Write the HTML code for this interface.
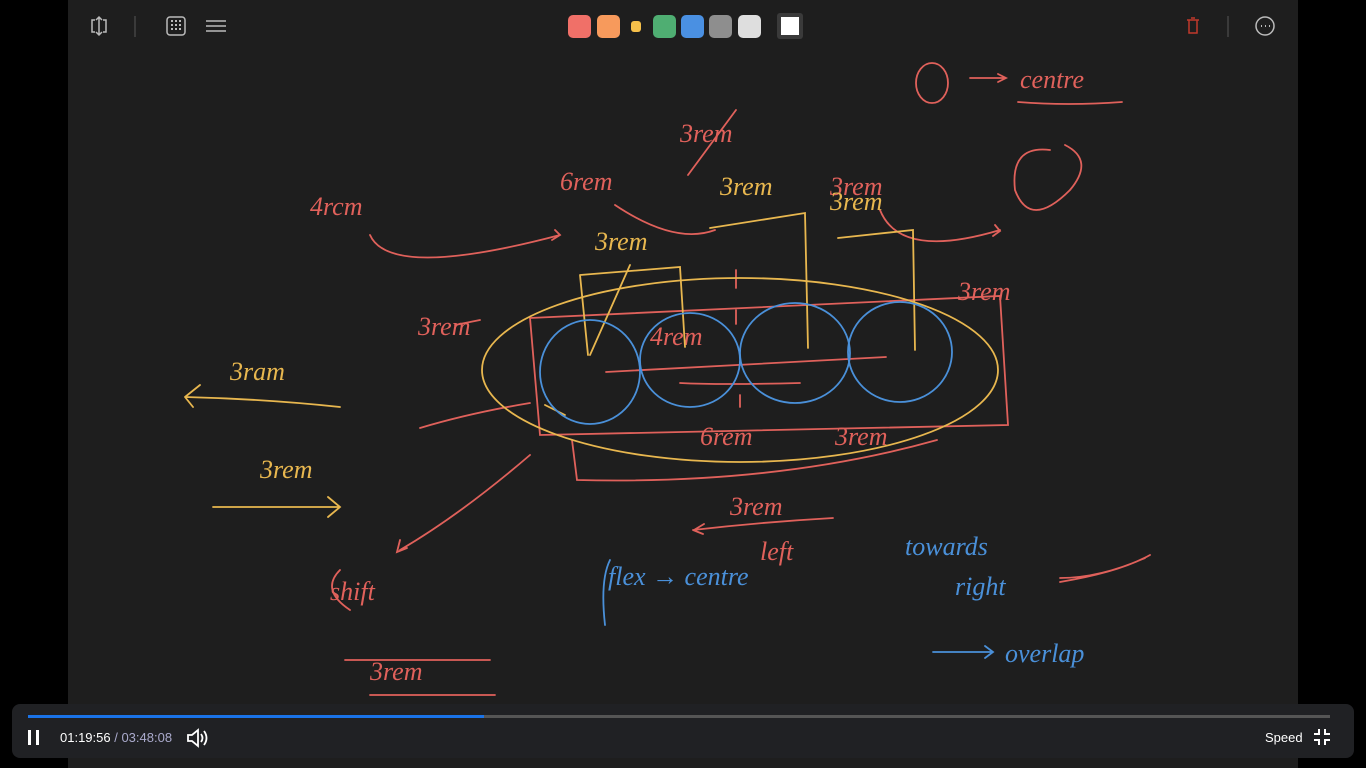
<!DOCTYPE html>
<html><head><meta charset="utf-8"><style>
body{margin:0;width:1366px;height:768px;background:#000;overflow:hidden;font-family:"Liberation Sans",sans-serif;position:relative}
#cv{position:absolute;left:68px;top:0;width:1230px;height:768px;background:#1e1e1e}
.sw{position:absolute;top:15px;width:23px;height:23px;border-radius:5px}
#bar{position:absolute;left:12px;top:704px;width:1342px;height:54px;background:#202124;border-radius:8px}
</style></head><body>
<div id="cv"></div>
<div style="position:absolute;left:0;top:0;width:1366px;height:55px">
<svg width="1366" height="55" style="position:absolute;left:0;top:0" fill="none" stroke="#bbb" stroke-width="1.5">
<path d="M95 20h-3v12h3M103 20h3v12h-3M99 17v18M96 20l3-3 3 3M96 32l3 3 3-3"/>
<line x1="135" y1="16" x2="135" y2="37" stroke="#444"/>
<rect x="167" y="17" width="18" height="18" rx="3"/>
<path d="M171 21h2M175 21h2M179 21h2M171 25h2M175 25h2M179 25h2M171 29h2M175 29h2M179 29h2" stroke-width="2"/>
<path d="M206 21h20M206 26h20M206 31h20"/>
<line x1="1228" y1="16" x2="1228" y2="37" stroke="#444"/>
<circle cx="1265" cy="26" r="9"/><path d="M1261 26h1M1265 26h1M1269 26h1" stroke-width="2"/>
<path d="M1187 20h12M1189 20v13h8v-13M1191 18h4" stroke="#c0392b"/>
</svg>
<div class="sw" style="left:568px;background:#f07068"></div>
<div class="sw" style="left:597px;background:#f79a5c"></div>
<div class="sw" style="left:631px;top:21px;width:10px;height:11px;border-radius:3px;background:#f6c04a"></div>
<div class="sw" style="left:653px;background:#4fae72"></div>
<div class="sw" style="left:681px;background:#4a90e2"></div>
<div class="sw" style="left:709px;background:#8e8e8e"></div>
<div class="sw" style="left:738px;background:#dedede"></div>
<div style="position:absolute;left:777px;top:13px;width:26px;height:26px;background:#3a3a3a;border-radius:3px"><div style="position:absolute;left:4px;top:4px;width:18px;height:18px;background:#fff"></div></div>
</div>
<svg width="1366" height="768" style="position:absolute;left:0;top:0" fill="none" stroke-width="1.8" stroke-linecap="round" font-family="Liberation Serif,serif" font-style="italic">
<g stroke="#e0615b">
<ellipse cx="932" cy="83" rx="16" ry="20"/><path d="M970 78h36M998 74l8 4-8 4M1018 102q50 4 104 0"/>
<path d="M1050 150q-40 -5 -35 40q15 40 55 0q25 -30 -5 -45"/>
<path d="M370 235q20 45 190 0M555 230l5 5-8 5M615 205q60 40 100 25M880 210q20 50 120 20M995 225l5 6-7 5"/>
<path d="M688 175l48-65"/>
<path d="M530 318 L1000 296 L1008 425 L540 435 Z"/>
<path d="M572 440l5 40q200 5 360-40"/>
<path d="M420 428q50-15 110-25M530 455q-70 60-130 95M400 540l-3 12 10-4"/>
<path d="M606 372l280-15M680 383q40 2 120 0M740 395v12M736 270v18M736 310v14"/>
<path d="M345 660h145M370 695h125M693 530q70-8 140-12M694 530l10-6M693 530l10 4"/>
<path d="M1060 582q60-10 90-27M1060 578q40 0 85-20"/>
<path d="M455 325l25-5M340 570q-20 20 10 40"/>
</g>
<g fill="#e0615b" stroke="none" font-size="26">
<text x="1020" y="88">centre</text><text x="680" y="142">3rem</text><text x="560" y="190">6rem</text>
<text x="310" y="215">4rcm</text><text x="958" y="300">3rem</text><text x="418" y="335">3rem</text>
<text x="700" y="445">6rem</text><text x="835" y="445">3rem</text><text x="330" y="600">shift</text>
<text x="370" y="680">3rem</text><text x="730" y="515">3rem</text><text x="760" y="560">left</text>
<text x="830" y="195">3rem</text><text x="650" y="345">4rem</text>
</g>
<g stroke="#e8b74f">
<ellipse cx="740" cy="370" rx="258" ry="92"/>
<path d="M580 275l100-8 5 80M710 228l95-15 3 135M838 238l75-8 2 120M580 275l8 80M630 265l-40 90"/>
<path d="M185 397q80 2 155 10M185 397l15-12M185 397l8 10M213 507h127M328 497l12 10-12 10"/>
<path d="M545 405l20 10"/>
</g>
<g fill="#e8b74f" stroke="none" font-size="26">
<text x="230" y="380">3ram</text><text x="260" y="478">3rem</text><text x="720" y="195">3rem</text>
<text x="830" y="210">3rem</text><text x="595" y="250">3rem</text>
</g>
<g stroke="#4a90d9">
<ellipse cx="590" cy="372" rx="50" ry="52"/><ellipse cx="690" cy="360" rx="50" ry="47"/>
<ellipse cx="795" cy="353" rx="55" ry="50"/><ellipse cx="900" cy="352" rx="52" ry="50"/>
<path d="M610 560q-10 20-5 65M933 652h60M985 646l8 6-8 6"/>
</g>
<g fill="#4a90d9" stroke="none" font-size="26">
<text x="608" y="585">flex → centre</text><text x="905" y="555">towards</text>
<text x="955" y="595">right</text><text x="1005" y="662">overlap</text>
</g>
</svg>
<div id="bar">
<div style="position:absolute;left:16px;top:11px;width:1302px;height:3px;background:#555"></div>
<div style="position:absolute;left:16px;top:11px;width:456px;height:3px;background:#1a73e8"></div>
<div style="position:absolute;left:16px;top:26px;width:3px;height:15px;background:#fff"></div>
<div style="position:absolute;left:24px;top:26px;width:3px;height:15px;background:#fff"></div>
<div style="position:absolute;left:48px;top:26px;font-size:13px;color:#fff">01:19:56 <span style="color:#aac">/ 03:48:08</span></div>
<svg style="position:absolute;left:174px;top:24px" width="24" height="20" fill="none" stroke="#fff" stroke-width="1.8"><path d="M2 7h4l6-5v16l-6-5H2z"/><path d="M15 6q3 4 0 8M18 3q5 7 0 14"/></svg>
<div style="position:absolute;left:1253px;top:26px;font-size:13px;color:#fff">Speed</div>
<svg style="position:absolute;left:1302px;top:25px" width="16" height="16" fill="none" stroke="#fff" stroke-width="2"><path d="M5 0v5H0M11 0v5h5M5 16v-5H0M11 16v-5h5"/></svg>
</div>
</body></html>
